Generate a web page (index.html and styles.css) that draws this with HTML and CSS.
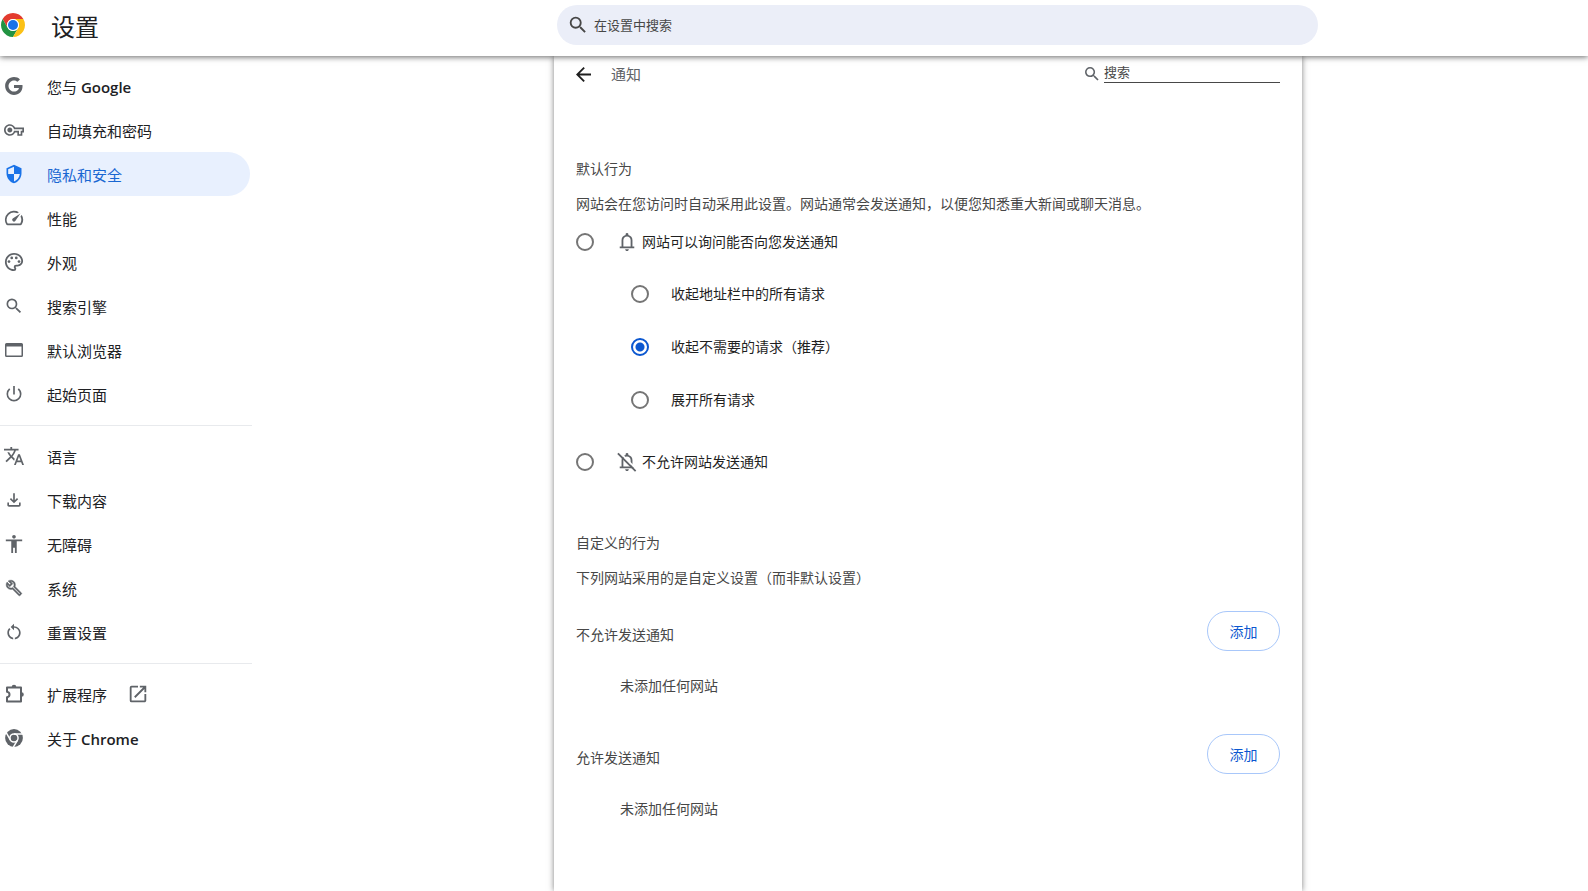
FILE: index.html
```html
<!DOCTYPE html>
<html lang="zh-CN">
<head>
<meta charset="utf-8">
<title>设置</title>
<link rel="stylesheet" href="styles.css">
</head>
<body>
<header class="topbar">
  <div class="brand">
    <svg class="logo" viewBox="0 0 48 48" aria-hidden="true">
      <path fill="#e33b2e" d="M24 12H44.78A24 24 0 0 0 3.22 12L13.61 30A12 12 0 0 1 24 12Z"/>
      <path fill="#229342" d="M13.61 30L3.22 12A24 24 0 0 0 24 48L34.39 30A12 12 0 0 1 13.61 30Z"/>
      <path fill="#fbc116" d="M34.39 30L24 48A24 24 0 0 0 44.78 12H24A12 12 0 0 1 34.39 30Z"/>
      <circle cx="24" cy="24" r="12" fill="#fff"/>
      <circle cx="24" cy="24" r="10" fill="#1a73e8"/>
    </svg>
    <h1 class="title">设置</h1>
  </div>
  <label class="search">
    <svg class="search-icon" viewBox="0 0 24 24" aria-hidden="true"><path d="M15.5 14h-.79l-.28-.27A6.47 6.47 0 0 0 16 9.5 6.5 6.5 0 1 0 9.5 16c1.61 0 3.09-.59 4.23-1.57l.27.28v.79l5 4.99L20.49 19l-4.99-5zm-6 0C7.01 14 5 11.99 5 9.5S7.01 5 9.5 5 14 7.01 14 9.5 11.99 14 9.5 14z"/></svg>
    <input class="search-input" type="text" placeholder="在设置中搜索" aria-label="在设置中搜索">
  </label>
</header>
<div class="page">
  <nav class="sidebar">
    <a class="item" href="#people"><svg class="icon" viewBox="0 0 18 18"><path d="M16.58 8H9v2.75h4.47c-.24 1.2-1.42 3.27-4.47 3.27-2.72 0-4.93-2.25-4.93-5.02S6.28 3.98 9 3.98c1.54 0 2.57.66 3.17 1.22l2.19-2.12C12.97 1.79 11.16 1 9 1 4.58 1 1 4.58 1 9s3.58 8 8 8c4.62 0 7.68-3.25 7.68-7.82 0-.46-.04-.83-.1-1.18z"/></svg><span>您与 <b class="latin">Google</b></span></a>
    <a class="item" href="#autofill"><svg class="icon" viewBox="0 0 24 24"><path d="M22 19h-6v-4h-2.68c-1.14 2.42-3.6 4-6.32 4-3.86 0-7-3.14-7-7s3.14-7 7-7c2.72 0 5.17 1.58 6.32 4H24v6h-2v4zm-4-2h2v-4h2v-2H11.94l-.23-.67C11.01 8.34 9.11 7 7 7c-2.76 0-5 2.24-5 5s2.24 5 5 5c2.11 0 4.01-1.34 4.71-3.33l.23-.67H18v4zM7 15c-1.65 0-3-1.35-3-3s1.35-3 3-3 3 1.35 3 3-1.35 3-3 3z"/></svg><span>自动填充和密码</span></a>
    <a class="item selected" href="#privacy" aria-current="page"><svg class="icon" viewBox="0 0 24 24"><path d="M12 1L3 5v6c0 5.55 3.84 10.74 9 12 5.16-1.26 9-6.45 9-12V5l-9-4zm0 10.99h7c-.53 4.12-3.28 7.79-7 8.94V12H5V6.3l7-3.11v8.8z"/></svg><span>隐私和安全</span></a>
    <a class="item" href="#performance"><svg class="icon" viewBox="1 1 22 22"><path d="M20.38 8.57l-1.23 1.85a8 8 0 0 1-.22 7.58H5.07A8 8 0 0 1 15.58 6.85l1.85-1.23A10 10 0 0 0 3.35 19a2 2 0 0 0 1.72 1h13.85a2 2 0 0 0 1.74-1 10 10 0 0 0-.27-10.44z"/><path d="M10.59 15.41a2 2 0 0 0 2.83 0l5.66-8.49-8.49 5.66a2 2 0 0 0 0 2.83z"/></svg><span>性能</span></a>
    <a class="item" href="#appearance"><svg class="icon" viewBox="1 1 22 22"><path d="M12 22C6.49 22 2 17.51 2 12S6.49 2 12 2s10 4.04 10 9c0 3.31-2.69 6-6 6h-1.77c-.28 0-.5.22-.5.5 0 .12.05.23.13.33.41.47.64 1.06.64 1.67A2.5 2.5 0 0 1 12 22zm0-18c-4.41 0-8 3.59-8 8s3.59 8 8 8c.28 0 .5-.22.5-.5a.54.54 0 0 0-.14-.35c-.41-.46-.63-1.05-.63-1.65a2.5 2.5 0 0 1 2.5-2.5H16c2.21 0 4-1.79 4-4 0-3.86-3.59-7-8-7z"/><circle cx="6.5" cy="11.5" r="1.5"/><circle cx="9.5" cy="7.5" r="1.5"/><circle cx="14.5" cy="7.5" r="1.5"/><circle cx="17.5" cy="11.5" r="1.5"/></svg><span>外观</span></a>
    <a class="item" href="#search"><svg class="icon" viewBox="0 0 24 24"><path d="M15.5 14h-.79l-.28-.27A6.47 6.47 0 0 0 16 9.5 6.5 6.5 0 1 0 9.5 16c1.61 0 3.09-.59 4.23-1.57l.27.28v.79l5 4.99L20.49 19l-4.99-5zm-6 0C7.01 14 5 11.99 5 9.5S7.01 5 9.5 5 14 7.01 14 9.5 11.99 14 9.5 14z"/></svg><span>搜索引擎</span></a>
    <a class="item" href="#browser"><svg class="icon" viewBox="0 0 20 20"><path fill-rule="evenodd" d="M2.5 3h15A1.5 1.5 0 0 1 19 4.5v11a1.500 1.500 0 0 1-1.500 1.500h-15A1.500 1.500 0 0 1 1 15.500v-11A1.500 1.500 0 0 1 2.500 3zM2.500 6.500v9h15v-9z"/></svg><span>默认浏览器</span></a>
    <a class="item" href="#startup"><svg class="icon" viewBox="0 0 24 24"><path d="M13 2.500h-2v10h2v-10zm4.830 2.670l-1.420 1.420A6.920 6.920 0 0 1 19 12c0 3.870-3.130 7-7 7s-7-3.130-7-7c0-2.190 1.010-4.140 2.580-5.420L6.170 5.170A8.930 8.930 0 0 0 3 12a9 9 0 0 0 18 0c0-2.740-1.230-5.180-3.170-6.830z"/></svg><span>起始页面</span></a>
    <hr class="divider">
    <a class="item" href="#languages"><svg class="icon" viewBox="1 1 22 22"><path d="M12.870 15.070l-2.540-2.510.03-.03c1.740-1.940 2.980-4.170 3.710-6.530H17V4h-7V2H8v2H1v1.990h11.170C11.500 7.920 10.440 9.750 9 11.350 8.070 10.320 7.300 9.190 6.690 8h-2c.73 1.630 1.730 3.170 2.980 4.560l-5.090 5.020L4 19l5-5 3.110 3.110.76-2.040zM18.500 10h-2L12 22h2l1.120-3h4.750L21 22h2l-4.500-12zm-2.620 7l1.620-4.330L19.120 17h-3.240z"/></svg><span>语言</span></a>
    <a class="item" href="#downloads"><svg class="icon" viewBox="0 0 24 24"><path d="M12 16l-5-5 1.400-1.450 2.600 2.600V4h2v8.150l2.600-2.600L17 11zM6 20q-.825 0-1.412-.588T4 18v-3h2v3h12v-3h2v3q0 .825-.588 1.412T18 20z"/></svg><span>下载内容</span></a>
    <a class="item" href="#accessibility"><svg class="icon" viewBox="1 1 22 22"><path d="M12 2c1.100 0 2 .9 2 2s-.9 2-2 2-2-.9-2-2 .9-2 2-2zm9 7h-6v13h-2v-6h-2v6H9V9H3V7h18v2z"/></svg><span>无障碍</span></a>
    <a class="item" href="#system"><svg class="icon" viewBox="-2 -2 28 28"><path stroke="#5f6368" stroke-width=".6" d="M22.610 18.990l-9.080-9.080c.93-2.340.45-5.100-1.440-7C9.790.61 6.210.4 3.660 2.260L7.500 6.110 6.080 7.520 2.250 3.690C.39 6.230.6 9.820 2.900 12.110c1.860 1.860 4.570 2.350 6.890 1.480l9.110 9.110c.39.39 1.020.39 1.410 0l2.300-2.300c.4-.38.4-1.010 0-1.410zm-3 1.600l-9.460-9.460c-.61.45-1.290.72-2 .82-1.360.2-2.790-.21-3.830-1.250C3.370 9.760 2.930 8.500 3 7.260l3.090 3.090 4.240-4.240-3.090-3.090c1.240-.07 2.490.37 3.440 1.310 1.080 1.080 1.490 2.570 1.240 3.960-.12.71-.42 1.370-.88 1.960l9.450 9.450-.88.89z"/></svg><span>系统</span></a>
    <a class="item" href="#reset"><svg class="icon" viewBox="0 0 24 24"><path d="M12 5V2L8 6l4 4V7c3.310 0 6 2.690 6 6 0 2.970-2.170 5.430-5 5.910v2.020c3.950-.49 7-3.850 7-7.930 0-4.420-3.580-8-8-8zm-6 8c0-1.650.67-3.150 1.760-4.240L6.340 7.340C4.900 8.790 4 10.790 4 13c0 4.080 3.050 7.440 7 7.930v-2.020c-2.830-.48-5-2.940-5-5.910z"/></svg><span>重置设置</span></a>
    <hr class="divider">
    <a class="item" href="#extensions"><svg class="icon" viewBox="0 0 20 20"><path fill="none" stroke="#5f6368" stroke-width="2" stroke-linejoin="round" d="M3 3.500h14v14H3v-4.200c1.600-.3 2.500-1.400 2.500-2.800S4.600 8 3 7.700z"/><path d="M7.700 3a2.300 2.300 0 0 1 4.600 0zM17.500 8.200a2.300 2.300 0 0 1 0 4.600z"/></svg><span>扩展程序</span><svg class="external" viewBox="0 0 24 24"><path d="M19 19H5V5h7V3H5a2 2 0 0 0-2 2v14a2 2 0 0 0 2 2h14c1.100 0 2-.9 2-2v-7h-2v7zM14 3v2h3.590l-9.830 9.830 1.410 1.410L19 6.410V10h2V3h-7z"/></svg></a>
    <a class="item" href="#about"><svg class="icon" viewBox="-3 -3 54 54"><circle cx="24" cy="24" r="24"/><g fill="none" stroke="#fff" stroke-width="4"><circle cx="24" cy="24" r="11"/><path d="M24 13H48M14.500 29.500L2.500 8.700M33.500 29.500L21.500 50.300"/></g></svg><span>关于 <b class="latin">Chrome</b></span></a>
  </nav>
  <main class="card">
    <div class="subheader">
      <button class="back" type="button" aria-label="返回"><svg class="back-icon" viewBox="4 4 16 16"><path d="M20 11H7.830l5.590-5.590L12 4l-8 8 8 8 1.410-1.410L7.830 13H20v-2z"/></svg></button>
      <h2 class="subtitle">通知</h2>
      <label class="filter">
        <svg class="filter-icon" viewBox="3 3 18 18" aria-hidden="true"><path d="M15.500 14h-.79l-.28-.27A6.470 6.470 0 0 0 16 9.500 6.500 6.500 0 1 0 9.500 16c1.610 0 3.090-.59 4.230-1.570l.27.28v.79l5 4.990L20.490 19l-4.990-5zm-6 0C7.010 14 5 11.990 5 9.500S7.010 5 9.500 5 14 7.010 14 9.500 11.990 14 9.500 14z"/></svg>
        <input class="filter-input" type="text" placeholder="搜索" aria-label="搜索">
      </label>
    </div>

    <section class="group">
      <h3 class="line">默认行为</h3>
      <p class="line">网站会在您访问时自动采用此设置。网站通常会发送通知，以便您知悉重大新闻或聊天消息。</p>
      <label class="option">
        <input class="radio" type="radio" name="behavior">
        <svg class="bell" viewBox="1 1 22 22" aria-hidden="true"><path d="M4 19v-2h2v-7q0-2.075 1.250-3.688T10.500 4.200v-.7q0-.625.438-1.062T12 2t1.063.438T13.500 3.500v.7q2 .5 3.250 2.112T18 10v7h2v2H4Zm8 3q-.825 0-1.412-.588T10 20h4q0 .825-.588 1.413T12 22ZM8 17h8v-7q0-1.650-1.175-2.825T12 6 9.175 7.175 8 10v7Z"/></svg>
        <span>网站可以询问能否向您发送通知</span>
      </label>
      <div class="suboptions">
        <label class="suboption"><input class="radio" type="radio" name="prompt"><span>收起地址栏中的所有请求</span></label>
        <label class="suboption"><input class="radio" type="radio" name="prompt" checked><span>收起不需要的请求（推荐）</span></label>
        <label class="suboption"><input class="radio" type="radio" name="prompt"><span>展开所有请求</span></label>
      </div>
      <label class="option">
        <input class="radio" type="radio" name="behavior">
        <svg class="bell" viewBox="1 1 22 22" aria-hidden="true"><path d="M4 19v-2h2v-7q0-2.075 1.250-3.688T10.500 4.200v-.7q0-.625.438-1.062T12 2t1.063.438T13.500 3.500v.7q2 .5 3.250 2.112T18 10v7h2v2H4Zm8 3q-.825 0-1.412-.588T10 20h4q0 .825-.588 1.413T12 22ZM8 17h8v-7q0-1.650-1.175-2.825T12 6 9.175 7.175 8 10v7Z"/><path fill="none" stroke="#fff" stroke-width="2" d="M4 1.500L22.500 20"/><path fill="none" stroke="#5f6368" stroke-width="2" d="M2 2.500L21.500 22"/></svg>
        <span>不允许网站发送通知</span>
      </label>
    </section>

    <section class="group custom">
      <h3 class="line">自定义的行为</h3>
      <p class="line">下列网站采用的是自定义设置（而非默认设置）</p>
      <div class="list">
        <div class="list-head"><h4 class="list-title">不允许发送通知</h4><button class="add" type="button">添加</button></div>
        <p class="empty">未添加任何网站</p>
      </div>
      <div class="list">
        <div class="list-head"><h4 class="list-title">允许发送通知</h4><button class="add" type="button">添加</button></div>
        <p class="empty">未添加任何网站</p>
      </div>
    </section>
  </main>
</div>
</body>
</html>
```
FILE: styles.css
```css
* {
  box-sizing: border-box;
}

body {
  margin: 0;
  min-height: 100vh;
  display: flex;
  flex-direction: column;
  background: #fff;
  color: #202124;
  font-family: "Open Sans", "Noto Sans CJK SC", sans-serif;
  font-size: 14px;
  line-height: 20px;
}

h1, h2, h3, h4, p {
  margin: 0;
  font-weight: 400;
}

input, button {
  font-family: inherit;
}

svg {
  flex: none;
  fill: #5f6368;
}

.topbar {
  position: relative;
  z-index: 1;
  display: grid;
  grid-template-columns: 557fr 761fr 270fr;
  height: 56px;
  background: #fff;
  box-shadow: 0 1px 6px rgba(0, 0, 0, 0.6);
}

.brand {
  display: flex;
  align-items: center;
  gap: 26px;
  padding: 0 0 6px 1px;
}

.logo {
  width: 24px;
  height: 24px;
}

.title {
  padding-top: 3px;
  font-size: 24px;
  line-height: 32px;
}

.search {
  display: flex;
  align-items: center;
  gap: 5px;
  height: 40px;
  margin-top: 5px;
  padding: 0 20px 0 10px;
  border-radius: 20px;
  background: #ebeef8;
}

.search-icon {
  width: 22px;
  height: 22px;
  fill: #474747;
}

.search-input {
  flex: 1;
  min-width: 0;
  padding: 0;
  border: 0;
  outline: 0;
  background: none;
  font-size: 13px;
}

.search-input::placeholder,
.filter-input::placeholder {
  color: #474747;
  opacity: 1;
}

.page {
  flex: 1;
  display: grid;
  grid-template-columns: 252px 302fr 748fr 286fr;
}

.sidebar {
  padding-top: 8px;
}

.item {
  display: flex;
  align-items: center;
  height: 44px;
  margin-right: 2px;
  padding-left: 4px;
  border-radius: 0 22px 22px 0;
  color: #202124;
  font-size: 15px;
  text-decoration: none;
}

.item span {
  padding-top: 2px;
}

.latin {
  font-weight: 600;
}

.icon {
  width: 20px;
  height: 20px;
  margin-right: 23px;
}

.external {
  width: 22px;
  height: 22px;
  margin-left: 20px;
}

.selected {
  background: #e8f0fe;
  color: #1967d2;
}

.selected .icon {
  fill: #1a73e8;
}

.divider {
  height: 1px;
  margin: 9px 0 8px;
  border: 0;
  background: #e8eaed;
}

.card {
  grid-column: 3;
  padding: 0 22px 40px;
  background: #fff;
  box-shadow: 0 0 6px rgba(0, 0, 0, 0.5);
}

.subheader {
  display: flex;
  align-items: center;
  height: 36px;
}

.back {
  display: flex;
  margin-right: 20px;
  padding: 0;
  border: 0;
  background: none;
}

.back-icon {
  width: 15px;
  height: 15px;
  fill: #1f1f1f;
}

.subtitle {
  flex: 1;
  color: #5f6368;
  font-size: 15px;
}

.filter {
  display: flex;
  align-items: center;
  gap: 5px;
}

.filter-icon {
  width: 14px;
  height: 14px;
}

.filter-input {
  width: 176px;
  height: 18px;
  padding: 0 0 3px;
  border: 0;
  border-bottom: 1px solid #474747;
  outline: 0;
  background: none;
  font-size: 13px;
}

.group {
  padding-top: 60px;
  color: #474747;
}

.custom {
  padding-top: 45px;
}

.line {
  padding: 7px 0 8px;
}

.option,
.suboption {
  display: flex;
  align-items: center;
  color: #1f1f1f;
}

.option {
  height: 39px;
}

.suboptions {
  padding: 6px 0 16px 55px;
}

.suboption {
  gap: 22px;
  height: 53px;
}

.radio {
  appearance: none;
  flex: none;
  width: 18px;
  height: 18px;
  margin: 0;
  border: 2px solid #757575;
  border-radius: 50%;
}

.radio:checked {
  border-color: #0b57d0;
  background: radial-gradient(circle, #0b57d0 4px, transparent 5px);
}

.bell {
  width: 20px;
  height: 20px;
  margin: 0 5px 0 23px;
}

.list {
  padding: 15px 0;
}

.list-head {
  display: flex;
  align-items: center;
  justify-content: space-between;
}

.list-title {
  padding-top: 8px;
  font-size: 14px;
}

.line,
.empty {
  font-size: 14px;
}

.add {
  width: 73px;
  height: 40px;
  padding: 0;
  border: 1px solid #a8c7fa;
  border-radius: 20px;
  background: #fff;
  color: #0b57d0;
  font-size: 14px;
}

.empty {
  padding: 25px 0 8px 44px;
}
```
